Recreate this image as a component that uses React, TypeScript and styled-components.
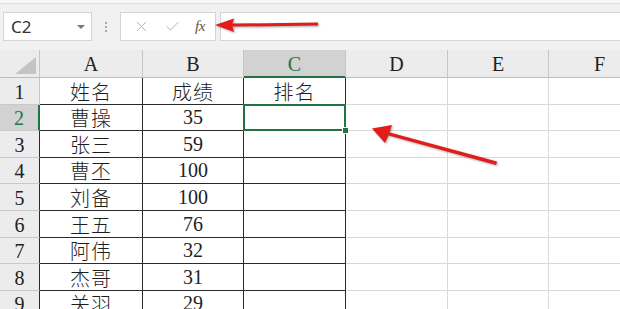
import styled, { createGlobalStyle } from "styled-components";
import { X, Check } from "lucide-react";

const GlobalStyle = createGlobalStyle`
  html, body {
    margin: 0;
    padding: 0;
    background: #ffffff;
  }
`;

const GREEN = "#217346";
const GRID = "#d9d9d9";
const DARK = "#2a2a2a";

const Page = styled.div`
  position: relative;
  width: 620px;
  height: 309px;
  overflow: hidden;
  background: #ffffff;
  font-family: "Liberation Serif", "Noto Sans CJK SC", serif;
`;

const Toolbar = styled.div`
  height: 50px;
  box-sizing: border-box;
  padding: 12px 0 9px 3px;
  display: flex;
  align-items: stretch;
  background: #f1f1f1;
  box-shadow: inset 0 3px 0 #f7f7f7, inset 0 4px 0 #e0e0e0;
`;

const NameBox = styled.div`
  width: 89px;
  box-sizing: border-box;
  border: 1px solid #d4d4d4;
  background: #fff;
  display: flex;
  align-items: center;
  justify-content: space-between;
  padding: 0 6px 0 7px;
  font-family: "Noto Sans", "Liberation Sans", sans-serif;
  font-size: 17px;
  color: #333;
`;

const Caret = styled.span`
  width: 0;
  height: 0;
  border-left: 4px solid transparent;
  border-right: 4px solid transparent;
  border-top: 4px solid #777;
  margin-top: 1px;
`;

const Grip = styled.div`
  width: 28px;
  display: flex;
  flex-direction: column;
  align-items: center;
  justify-content: center;
  gap: 2px;

  span {
    width: 2px;
    height: 2px;
    background: #a8a8a8;
  }
`;

const FormulaButtons = styled.div`
  width: 96px;
  box-sizing: border-box;
  border: 1px solid #d4d4d4;
  background: #fff;
  display: flex;
  align-items: center;
  justify-content: space-around;
  padding: 0 3px 0 5px;
  color: #adadad;
`;

const Fx = styled.span`
  font-family: "Liberation Serif", serif;
  font-style: italic;
  font-size: 15px;
  color: #555;
  letter-spacing: -0.5px;
`;

const FormulaInput = styled.div`
  flex: 1;
  margin-left: 4px;
  border: 1px solid #d4d4d4;
  border-right: none;
  background: #fff;
`;

const Sheet = styled.div`
  display: grid;
  grid-template-columns: 40px 103px 101px 102px 102px 101px 102px;
  grid-template-rows: 28px repeat(9, 26.6px);
`;

const Corner = styled.div`
  background: #ececec;
  border-right: 1px solid #c6c6c6;
  border-bottom: 1px solid #bdbdbd;
  box-sizing: border-box;
  position: relative;

  &::after {
    content: "";
    position: absolute;
    right: 3px;
    bottom: 3px;
    width: 0;
    height: 0;
    border-left: 21px solid transparent;
    border-bottom: 17px solid #c4c4c4;
  }
`;

const ColHead = styled.div<{ $active?: boolean }>`
  box-sizing: border-box;
  background: ${(p) => (p.$active ? "#d2d2d2" : "#ececec")};
  border-right: 1px solid #c6c6c6;
  border-bottom: ${(p) => (p.$active ? `2px solid ${GREEN}` : "1px solid #bdbdbd")};
  display: flex;
  align-items: center;
  justify-content: center;
  padding-top: ${(p) => (p.$active ? "3px" : "2px")};
  font-size: 20px;
  color: ${(p) => (p.$active ? GREEN : "#222")};
`;

const RowHead = styled.div<{ $active?: boolean; $edge: string }>`
  box-sizing: border-box;
  background: ${(p) => (p.$active ? "#d2d2d2" : "#ececec")};
  border-bottom: 1px solid #c9c9c9;
  border-right: ${(p) => (p.$active ? `2px solid ${GREEN}` : `1px solid ${p.$edge}`)};
  display: flex;
  align-items: flex-end;
  justify-content: center;
  font-size: 20px;
  line-height: 24px;
  color: ${(p) => (p.$active ? GREEN : "#222")};
`;

const Cell = styled.div<{ $table?: boolean; $selected?: boolean }>`
  position: relative;
  box-sizing: border-box;
  border-right: 1px solid ${(p) => (p.$table ? DARK : GRID)};
  border-bottom: 1px solid ${(p) => (p.$table ? DARK : GRID)};
  display: flex;
  align-items: flex-end;
  justify-content: center;
  font-size: 20px;
  line-height: 25px;
  color: #1e1e1e;
  white-space: nowrap;

  ${(p) =>
    p.$selected &&
    `
    &::after {
      content: "";
      position: absolute;
      left: -1px;
      top: -1px;
      right: -1px;
      bottom: -1px;
      border: 2px solid ${GREEN};
      pointer-events: none;
    }
    &::before {
      content: "";
      position: absolute;
      right: -4px;
      bottom: -4px;
      width: 5px;
      height: 5px;
      background: ${GREEN};
      border: 1px solid #fff;
      z-index: 2;
    }
  `}
`;

const Cjk = styled.span`
  font-family: "Noto Sans CJK SC", sans-serif;
  font-weight: 300;
  font-size: 20px;
  letter-spacing: 1px;
`;

const Arrows = styled.svg`
  position: absolute;
  left: 0;
  top: 0;
  pointer-events: none;
  filter: drop-shadow(1px 1px 1px rgba(0, 0, 0, 0.35));
`;

const columns = ["A", "B", "C", "D", "E", "F"];

const rows: [string, string][] = [
  ["姓名", "成绩"],
  ["曹操", "35"],
  ["张三", "59"],
  ["曹丕", "100"],
  ["刘备", "100"],
  ["王五", "76"],
  ["阿伟", "32"],
  ["杰哥", "31"],
  ["关羽", "29"],
];

export default function App() {
  return (
    <Page>
      <GlobalStyle />
      <Toolbar>
        <NameBox>
          C2
          <Caret />
        </NameBox>
        <Grip>
          <span />
          <span />
          <span />
        </Grip>
        <FormulaButtons>
          <X size={17} strokeWidth={1.3} />
          <Check size={17} strokeWidth={1.3} />
          <Fx>fx</Fx>
        </FormulaButtons>
        <FormulaInput />
      </Toolbar>

      <Sheet>
        <Corner />
        {columns.map((c) => (
          <ColHead key={c} $active={c === "C"}>
            {c}
          </ColHead>
        ))}
        {rows.map(([name, score], i) => {
          const n = i + 1;
          return [
            <RowHead key={`h${n}`} $active={n === 2} $edge={n === 1 ? "#c6c6c6" : DARK}>
              {n}
            </RowHead>,
            <Cell key={`a${n}`} $table>
              <Cjk>{name}</Cjk>
            </Cell>,
            <Cell key={`b${n}`} $table>
              {n === 1 ? <Cjk>{score}</Cjk> : score}
            </Cell>,
            <Cell key={`c${n}`} $table $selected={n === 2}>
              {n === 1 ? <Cjk>排名</Cjk> : null}
            </Cell>,
            <Cell key={`d${n}`} />,
            <Cell key={`e${n}`} />,
            <Cell key={`f${n}`} />,
          ];
        })}
      </Sheet>

      <Arrows width="620" height="309" viewBox="0 0 620 309">
        <g fill="#e31b1b" stroke="none">
          <path d="M318 22.6 L232 23.6 L232 26.6 L318 25.6 Z" />
          <path d="M215 25 L234 18.5 L232 25 L234 32 Z" />
          <path d="M497 161.5 L388 132 L387 135 L496 165 Z" />
          <path d="M372 128.5 L392 125 L389 134 L385 143 Z" />
        </g>
      </Arrows>
    </Page>
  );
}
